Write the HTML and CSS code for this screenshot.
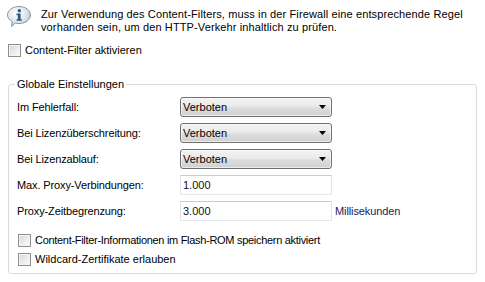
FILE: index.html
```html
<!DOCTYPE html>
<html>
<head>
<meta charset="utf-8">
<link rel="stylesheet" href="styles.css">
</head>
<body>
<div class="info">
  <svg class="info-icon" width="26" height="26" viewBox="0 0 26 26">
    <defs>
      <radialGradient id="bg" cx="0.4" cy="0.35" r="0.7">
        <stop offset="0" stop-color="#ffffff"/>
        <stop offset="0.6" stop-color="#dfe6ec"/>
        <stop offset="1" stop-color="#aebdca"/>
      </radialGradient>
    </defs>
    <path d="M13 3.5 C19.5 3.5 24.5 7.3 24.5 12 C24.5 16.7 19.5 20.5 13 20.5 C11.6 20.5 10.4 20.3 9.2 20 L5.5 23.5 L6.3 18.6 C3.3 17 1.5 14.6 1.5 12 C1.5 7.3 6.5 3.5 13 3.5 Z" fill="url(#bg)" stroke="#8796a4" stroke-width="1"/>
    <circle cx="13.3" cy="7.8" r="1.7" fill="#2c5a86"/>
    <path d="M10.5 10.6 H14.6 V16.2 H15.8 V17.8 H10.6 V16.2 H11.8 V12.2 H10.5 Z" fill="#2c5a86"/>
  </svg>
  <div class="info-text">Zur Verwendung des Content-Filters, muss in der Firewall eine entsprechende Regel<br>vorhanden sein, um den HTTP-Verkehr inhaltlich zu prüfen.</div>
</div>

<label class="check main-check"><span class="box"></span><span>Content-Filter aktivieren</span></label>

<fieldset class="group">
  <legend>Globale Einstellungen</legend>
  <div class="form">
    <span class="label">Im Fehlerfall:</span>
    <div class="combo"><span>Verboten</span><svg class="arrow" width="7" height="4" viewBox="0 0 7 4"><path d="M0 0H7L3.5 4Z" fill="#000"/></svg></div>
    <span></span>

    <span class="label">Bei Lizenzüberschreitung:</span>
    <div class="combo"><span>Verboten</span><svg class="arrow" width="7" height="4" viewBox="0 0 7 4"><path d="M0 0H7L3.5 4Z" fill="#000"/></svg></div>
    <span></span>

    <span class="label">Bei Lizenzablauf:</span>
    <div class="combo"><span>Verboten</span><svg class="arrow" width="7" height="4" viewBox="0 0 7 4"><path d="M0 0H7L3.5 4Z" fill="#000"/></svg></div>
    <span></span>

    <span class="label">Max. Proxy-Verbindungen:</span>
    <div class="field">1.000</div>
    <span></span>

    <span class="label">Proxy-Zeitbegrenzung:</span>
    <div class="field">3.000</div>
    <span class="unit">Millisekunden</span>
  </div>
  <div class="checks">
    <label class="check"><span class="box"></span><span class="long">Content-Filter-Informationen im Flash-ROM speichern aktiviert</span></label>
    <label class="check"><span class="box"></span><span>Wildcard-Zertifikate erlauben</span></label>
  </div>
</fieldset>
</body>
</html>
```

FILE: styles.css
```css
html, body {
  margin: 0;
  padding: 0;
  background: #ffffff;
}
body {
  width: 485px;
  height: 282px;
  overflow: hidden;
  font-family: "Liberation Sans", Arial, sans-serif;
  font-size: 11px;
  color: #000;
}
.info {
  display: flex;
  align-items: flex-start;
  padding: 3px 0 0 6px;
}
.info-icon {
  flex: none;
  display: block;
}
.info-text {
  margin-left: 9px;
  margin-top: 5px;
  line-height: 13px;
  letter-spacing: 0.12px;
}
.check {
  display: flex;
  align-items: center;
  height: 13px;
  line-height: 13px;
}
.box {
  flex: none;
  width: 11px;
  height: 11px;
  border: 1px solid #8e8f8f;
  background: linear-gradient(135deg, #d6d6d6 0%, #f2f2f2 70%, #fbfbfb 100%);
  box-shadow: inset 0 0 0 1px #f4f4f4;
  margin-right: 4px;
}
.main-check {
  margin: 10px 0 0 8px;
}
.group {
  margin: 21px 8px 0 8px;
  padding: 0 8px 7px 8px;
  border: 1px solid #d5dde3;
  border-radius: 3px;
  min-width: 0;
}
.group legend {
  padding: 0 2px;
  margin-left: -2px;
  line-height: 13px;
}
.form {
  margin-top: 6px;
  display: grid;
  grid-template-columns: 163px 152px auto;
  grid-auto-rows: 20px;
  row-gap: 6px;
  align-items: center;
}
.label {
  letter-spacing: -0.12px;
}
.combo {
  box-sizing: border-box;
  height: 20px;
  border: 1px solid #707070;
  border-radius: 3px;
  background: linear-gradient(#f2f2f2 0%, #ebebeb 45%, #dddddd 55%, #cfcfcf 100%);
  box-shadow: inset 0 0 0 1px rgba(255,255,255,0.6);
  display: flex;
  align-items: center;
  justify-content: space-between;
  padding: 0 5px 0 2px;
}
.arrow {
  display: block;
}
.field {
  box-sizing: border-box;
  height: 20px;
  border: 1px solid;
  border-color: #c9ccd1 #e2e3ea #e3e9ef #e2e3ea;
  display: flex;
  align-items: center;
  padding-left: 2px;
  color: #111;
}
.unit {
  padding-left: 3px;
  color: #1b1b5e;
  letter-spacing: -0.1px;
}
.checks {
  margin-top: 13px;
  margin-left: 1px;
  display: flex;
  flex-direction: column;
  row-gap: 6px;
}
.long {
  letter-spacing: -0.3px;
}
```
